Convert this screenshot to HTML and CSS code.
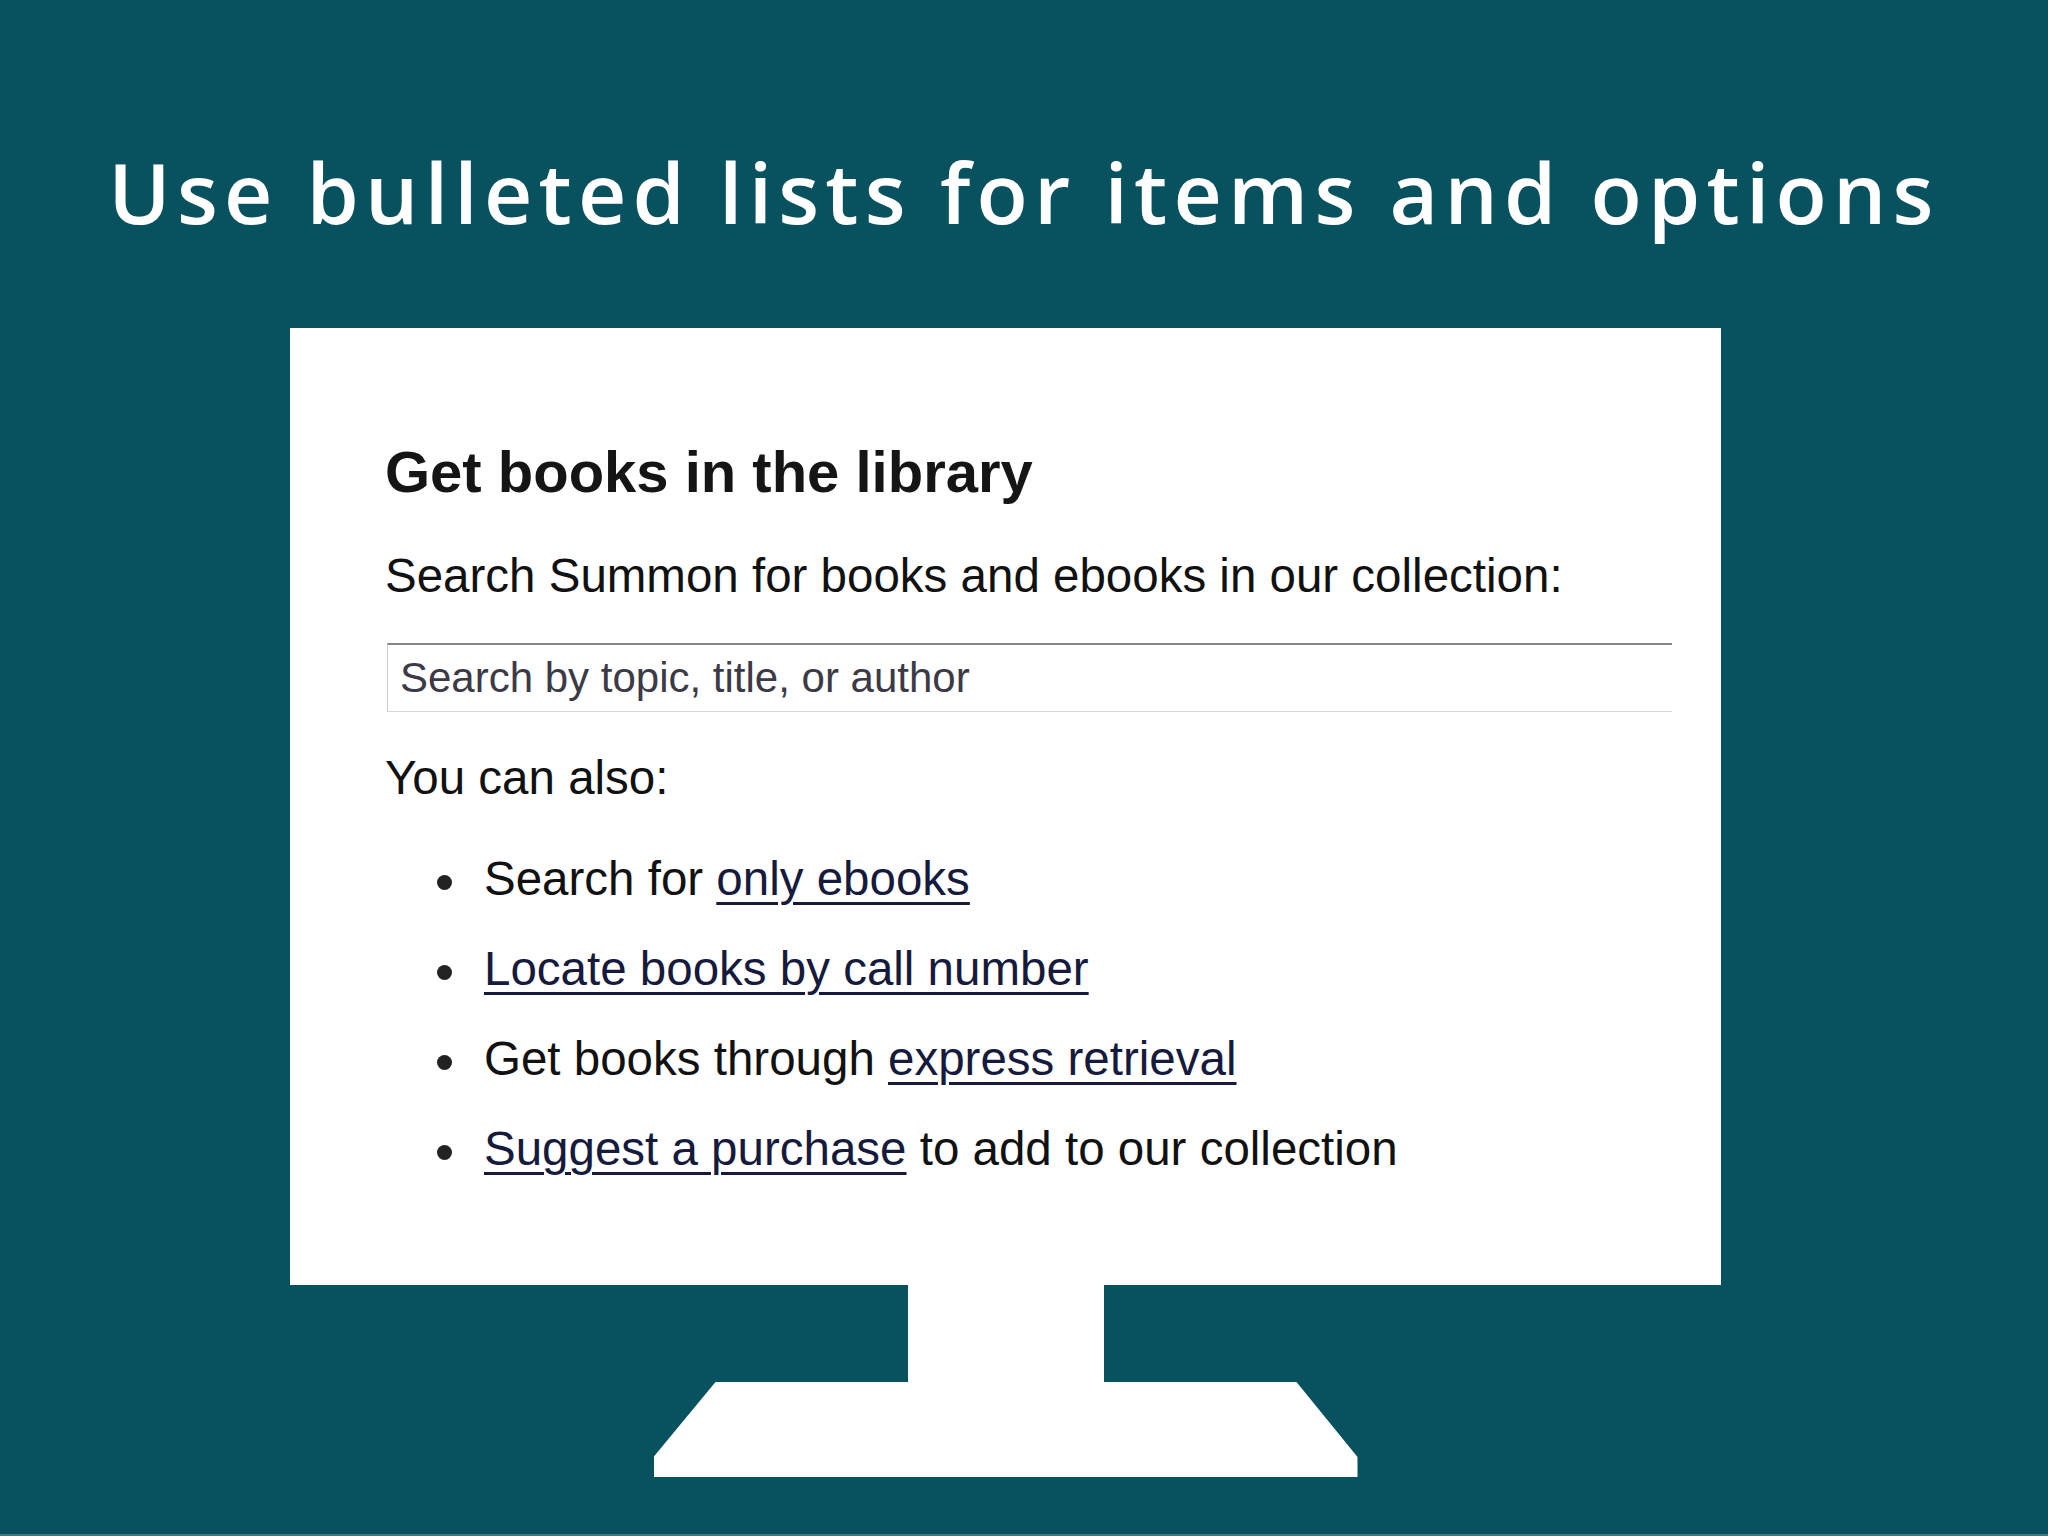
FILE: index.html
```html
<!DOCTYPE html>
<html lang="en">
<head>
<meta charset="utf-8">
<title>Use bulleted lists for items and options</title>
<link rel="stylesheet" href="styles.css">
</head>
<body>
<div class="slide">
  <h1 class="slide-title">Use bulleted lists for items and options</h1>
  <div class="monitor">
    <div class="screen">
      <h2 class="screen-heading">Get books in the library</h2>
      <p class="screen-text">Search Summon for books and ebooks in our collection:</p>
      <div class="search-box">Search by topic, title, or author</div>
      <p class="screen-text also">You can also:</p>
      <ul class="options">
        <li>Search for <a href="#">only ebooks</a></li>
        <li><a href="#">Locate books by call number</a></li>
        <li>Get books through <a href="#">express retrieval</a></li>
        <li><a href="#">Suggest a purchase</a> to add to our collection</li>
      </ul>
    </div>
    <div class="neck"></div>
    <div class="base"></div>
  </div>
</div>
</body>
</html>
```

FILE: styles.css
```css
html, body {
  margin: 0;
  padding: 0;
}

body {
  background: #07525e;
  width: 2048px;
  height: 1536px;
  overflow: hidden;
}

.slide {
  height: 1536px;
  box-sizing: border-box;
  padding-top: 150px;
  border-bottom: 2px solid #3f7a84;
}

.slide-title {
  margin: 0;
  font-family: "Open Sans", "DejaVu Sans", sans-serif;
  font-weight: 600;
  font-size: 84px;
  line-height: 84px;
  letter-spacing: 6.2px;
  color: #ffffff;
  text-align: center;
}

.monitor {
  width: 1431px;
  margin-left: 290px;
  margin-top: 94px;
  display: flex;
  flex-direction: column;
  align-items: center;
}

.screen {
  align-self: stretch;
  height: 957px;
  box-sizing: border-box;
  background: #ffffff;
  padding: 115px 0 0 95px;
  font-family: "Liberation Sans", Arial, sans-serif;
  color: #111111;
}

.screen-heading {
  margin: 0;
  font-size: 58px;
  line-height: 58px;
  font-weight: 700;
  color: #151515;
}

.screen-text {
  margin: 51px 0 0;
  font-size: 47.5px;
  line-height: 47.5px;
}

.search-box {
  margin: 43px 0 0 2px;
  width: 1285px;
  box-sizing: border-box;
  height: 69px;
  border-top: 2px solid #878787;
  border-left: 1px solid #cfcfcf;
  border-bottom: 1px solid #d6d6d6;
  padding: 12px 0 0 12px;
  font-size: 42px;
  line-height: 42px;
  color: #3b3a46;
}

.screen-text.also {
  margin-top: 42px;
}

.options {
  list-style: none;
  margin: 33px 0 0;
  padding: 0;
}

.options li {
  display: flex;
  align-items: baseline;
  font-size: 47.5px;
  line-height: 90px;
  white-space: pre;
}

.options li::before {
  content: "";
  flex: none;
  width: 15px;
  height: 15px;
  border-radius: 50%;
  background: #222222;
  margin: 0 32px 0 52px;
  transform: translateY(-5px);
}

.options a {
  color: #161a3c;
  text-decoration: underline;
  text-decoration-thickness: 3px;
  text-underline-offset: 7px;
}

.neck {
  width: 196px;
  height: 97px;
  background: #ffffff;
}

.base {
  width: 704px;
  height: 95px;
  background: #ffffff;
  clip-path: polygon(62px 0, 643px 0, 704px 75px, 704px 95px, 0 95px, 0 75px);
}
```
